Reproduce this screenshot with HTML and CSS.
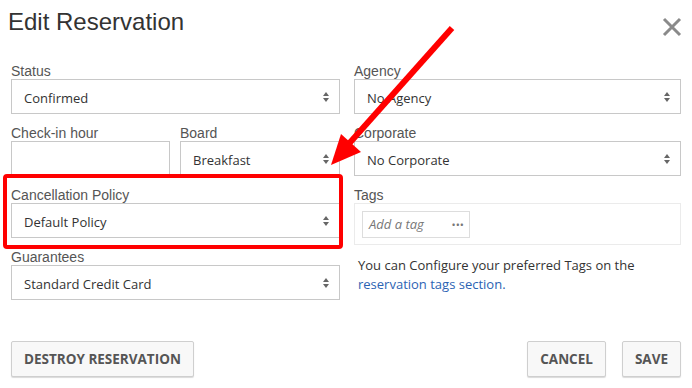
FILE: index.html
```html
<!DOCTYPE html>
<html lang="en">
<head>
  <meta charset="UTF-8" />
  <title>Edit Reservation</title>
  <link rel="stylesheet" href="styles.css">
</head>
<body>
  <div class="modal">
    <div class="modal-header">
      <h1>Edit Reservation</h1>
      <svg class="close" width="20" height="20" viewBox="0 0 20 20">
        <path d="M2 2 L18 18 M18 2 L2 18" stroke="#8a8a8a" stroke-width="3" fill="none"/>
      </svg>
    </div>

    <div class="modal-body">
      <div class="col">
        <div class="field">
          <label>Status</label>
          <div class="select">Confirmed<span class="caret"></span></div>
        </div>
        <div class="field split">
          <div class="part">
            <label>Check-in hour</label>
            <div class="input"></div>
          </div>
          <div class="part">
            <label>Board</label>
            <div class="select">Breakfast<span class="caret"></span></div>
          </div>
        </div>
        <div class="field">
          <label>Cancellation Policy</label>
          <div class="select">Default Policy<span class="caret"></span></div>
        </div>
        <div class="field">
          <label>Guarantees</label>
          <div class="select">Standard Credit Card<span class="caret"></span></div>
        </div>
      </div>

      <div class="col">
        <div class="field">
          <label>Agency</label>
          <div class="select">No Agency<span class="caret"></span></div>
        </div>
        <div class="field">
          <label>Corporate</label>
          <div class="select">No Corporate<span class="caret"></span></div>
        </div>
        <div class="field">
          <label>Tags</label>
          <div class="tags">
            <div class="tag-input">Add a tag<span class="dots">•••</span></div>
          </div>
        </div>
        <p class="help">You can Configure your preferred Tags on the <a href="#">reservation tags section.</a></p>
      </div>
    </div>

    <div class="modal-footer">
      <button class="btn">Destroy Reservation</button>
      <div class="right">
        <button class="btn">Cancel</button>
        <button class="btn">Save</button>
      </div>
    </div>

    <!-- annotation drawn over the screenshot -->
    <div class="highlight"></div>
    <svg class="arrow" width="692" height="388" viewBox="0 0 692 388">
      <line x1="452" y1="28" x2="346" y2="147" stroke="#ff0000" stroke-width="6"/>
      <polygon points="331,165 341,134 361,152" fill="#ff0000"/>
    </svg>
  </div>
</body>
</html>
```

FILE: styles.css
```css
body {
  margin: 0;
  background: #fff;
  font-family: 'Open Sans', sans-serif;
  color: #333;
}

.modal {
  position: relative;
  width: 692px;
  height: 388px;
  overflow: hidden;
}

.modal-header {
  display: flex;
  justify-content: space-between;
  align-items: flex-start;
  padding: 8px 10px 0 8px;
  height: 55px;
}

.modal-header h1 {
  margin: 0;
  font-family: 'Liberation Sans', Arial, sans-serif;
  font-weight: normal;
  font-size: 24px;
  line-height: 28px;
  color: #333;
}

.close {
  margin-top: 9px;
}

.modal-body {
  display: grid;
  grid-template-columns: 329px 327px;
  gap: 14px;
  padding: 0 11px;
}

.field {
  margin-bottom: 11px;
}

.field label {
  display: block;
  font-family: 'Liberation Sans', Arial, sans-serif;
  font-size: 14px;
  line-height: 16px;
  color: #555;
}

.split {
  display: flex;
  gap: 10px;
}

.split .part:first-child { width: 159px; }
.split .part:last-child { flex: 1; }

.select, .input {
  position: relative;
  box-sizing: border-box;
  height: 35px;
  border: 1px solid #c8c8c8;
  padding: 2px 12px 0;
  font-size: 13px;
  line-height: 33px;
  color: #333;
  background: #fff;
}

.caret {
  position: absolute;
  right: 9px;
  top: 12px;
  width: 7px;
  height: 10px;
}

.caret::before, .caret::after {
  content: "";
  position: absolute;
  left: 0;
  border-left: 3.5px solid transparent;
  border-right: 3.5px solid transparent;
}

.caret::before {
  top: 0;
  border-bottom: 4px solid #666;
}

.caret::after {
  bottom: 0;
  border-top: 4px solid #666;
}

.tags {
  box-sizing: border-box;
  height: 42px;
  border: 1px solid #ebebeb;
  padding: 7px 7px;
}

.tag-input {
  box-sizing: border-box;
  width: 108px;
  height: 27px;
  border: 1px solid #ddd;
  padding: 0 5px 0 6px;
  font-size: 13px;
  font-style: italic;
  line-height: 25px;
  color: #777;
  display: flex;
  justify-content: space-between;
}

.dots {
  font-style: normal;
  font-size: 11px;
  letter-spacing: 0;
  color: #777;
}

.help {
  margin: 5px 0 0;
  padding-left: 4px;
  font-size: 13px;
  line-height: 19px;
  color: #333;
}

.help a {
  color: #2c63b3;
  text-decoration: none;
}

.modal-footer {
  display: flex;
  justify-content: space-between;
  padding: 30px 11px 0;
}

.modal-footer .right {
  display: flex;
  gap: 16px;
}

.btn {
  height: 36px;
  padding: 0 12px;
  border: 1px solid #cfcfcf;
  border-radius: 2px;
  background: #f8f8f8;
  box-shadow: 0 1px 1px rgba(0, 0, 0, 0.15);
  font-family: 'Open Sans', sans-serif;
  font-size: 13.5px;
  font-weight: bold;
  text-transform: uppercase;
  color: #555;
}

.highlight {
  position: absolute;
  left: 3px;
  top: 174px;
  width: 332px;
  height: 67px;
  border: 4px solid #ff0000;
  border-radius: 4px;
}

.arrow {
  position: absolute;
  left: 0;
  top: 0;
  pointer-events: none;
}
```
